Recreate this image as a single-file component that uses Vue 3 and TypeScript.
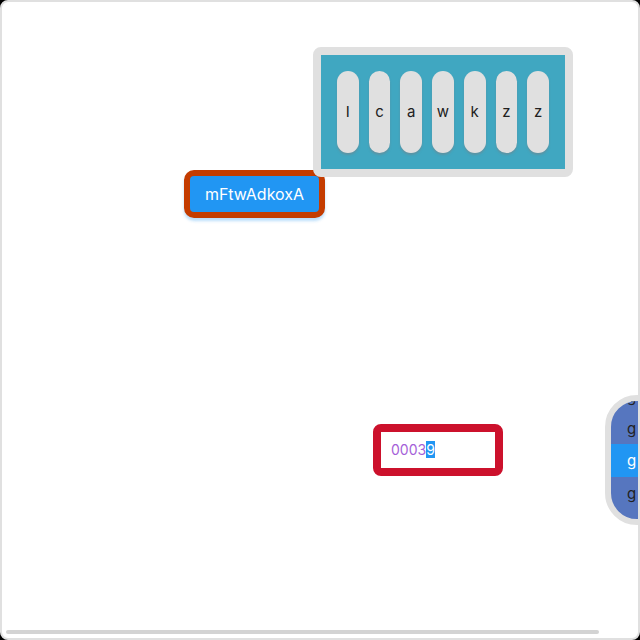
<script setup lang="ts">
import { onMounted, ref } from 'vue'

const keys: string[] = ['I', 'c', 'a', 'w', 'k', 'z', 'z']
const options: string[] = ['g', 'g', 'g', 'g', 'g']
const selected = ref(2)
const amount = ref('00039')
const field = ref<HTMLInputElement | null>(null)

onMounted(() => {
  field.value?.focus()
  field.value?.setSelectionRange(4, 5)
})
</script>

<template>
  <main class="screen">
    <button class="action" type="button">mFtwAdkoxA</button>

    <section class="panel">
      <button v-for="(key, i) in keys" :key="i" class="key" type="button">{{ key }}</button>
    </section>

    <input ref="field" v-model="amount" class="amount" type="text" aria-label="Amount" />

    <ul class="roller" role="listbox" aria-label="Options">
      <li
        v-for="(option, i) in options"
        :key="i"
        class="option"
        :class="{ current: i === selected }"
        role="option"
        :aria-selected="i === selected"
        @click="selected = i"
      >{{ option }}</li>
    </ul>

    <div class="scrollbar"></div>
  </main>
</template>

<style>
body {
  background: #000;
}
</style>

<style scoped>
.screen {
  position: relative;
  box-sizing: border-box;
  height: 100vh;
  overflow: hidden;
  border: 2px solid #e0e0e0;
  border-radius: 8px;
  background: #fff;
  color: #212121;
  font: 15px/16px Inter, "Open Sans", sans-serif;
}

.action,
.panel,
.amount,
.roller {
  position: absolute;
  box-sizing: border-box;
  margin: 0;
}

.action {
  left: 182px;
  top: 168px;
  padding: 10px 12px;
  width: 141px;
  height: 48px;
  border: 6px solid #c43c00;
  border-radius: 10px;
  background: #2196f3;
  box-shadow: 0 3px 3px rgba(33, 150, 243, 0.3);
  color: #fff;
  font: 16px/16px Inter, "Open Sans", sans-serif;
  text-align: center;
  white-space: nowrap;
}

.panel {
  left: 311px;
  top: 45px;
  display: grid;
  grid-template-columns: repeat(7, 1fr);
  gap: 10px;
  width: 260px;
  height: 130px;
  padding: 16px;
  border: 8px solid #e0e0e0;
  border-radius: 8px;
  background: #40a7c1;
}

.key {
  min-width: 0;
  padding: 0;
  border: 0;
  border-radius: 11px;
  background: #e0e0e0;
  box-shadow: 0 2px 2px rgba(120, 130, 135, 0.5);
  color: #212121;
  font: inherit;
}

.amount {
  left: 371px;
  top: 422px;
  width: 130px;
  height: 52px;
  padding: 0 10px 1px;
  border: 8px solid #cc112c;
  border-radius: 8px;
  outline: none;
  background: #fff;
  color: #a55fd8;
  font: 14px/16px Inter, "Open Sans", sans-serif;
}

.amount::selection {
  background: #2196f3;
  color: #fff;
}

.roller {
  left: 603px;
  top: 393px;
  display: flex;
  flex-direction: column;
  justify-content: center;
  width: 130px;
  height: 130px;
  padding: 1px 0 0;
  overflow: hidden;
  border: 6px solid #e0e0e0;
  border-radius: 32px;
  background: #5676bf;
  list-style: none;
}

.option {
  flex: none;
  height: 32px;
  padding: 0 16px;
  line-height: 33px;
}

.current {
  height: 33px;
  background: #2196f3;
  color: #fff;
}

.scrollbar {
  position: absolute;
  left: 4px;
  right: 39px;
  bottom: 4px;
  height: 4px;
  border-radius: 2px;
  background: #d3d3d3;
}
</style>
